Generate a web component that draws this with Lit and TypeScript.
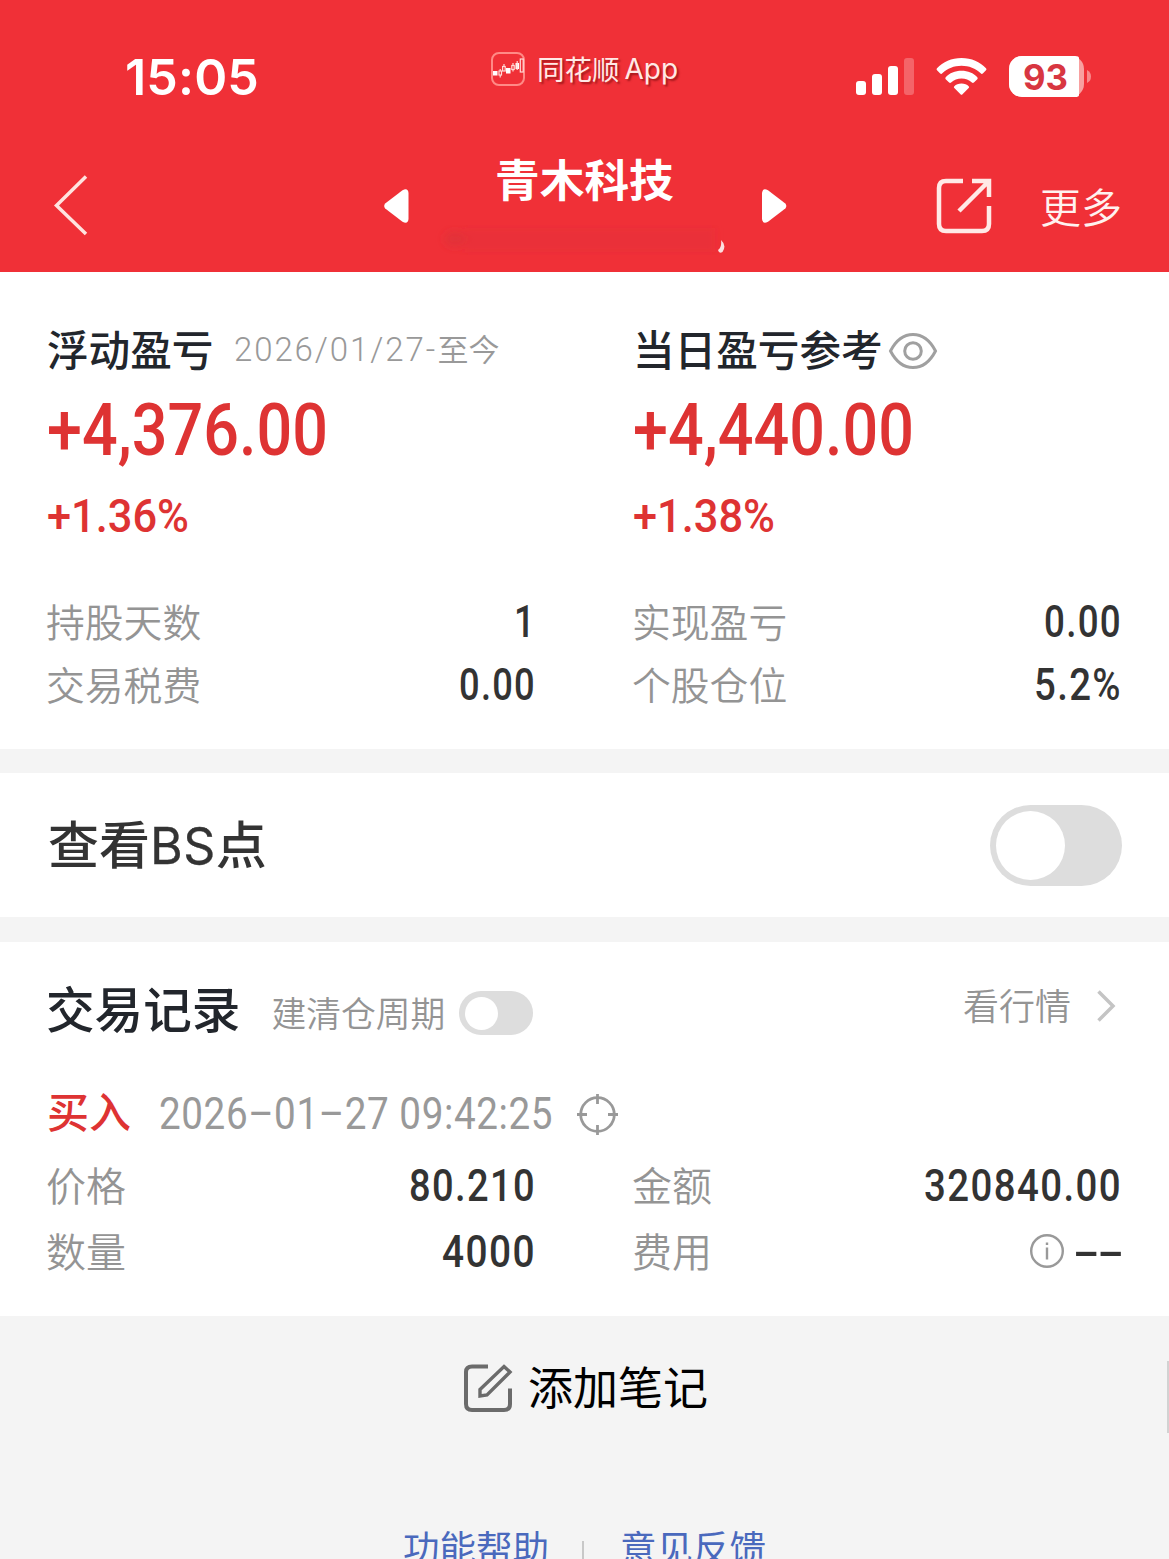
import { LitElement, html, css, svg } from "lit";
import { customElement, property } from "lit/decorators.js";

@customElement("fit-figure")
class FitFigure extends LitElement {
  @property() text = "";
  @property({ type: Number }) width = 100;
  @property({ type: Number }) cap = 31;
  @property({ type: Number }) size = 43.5;
  static styles = css`
    :host { display: block; flex: none; line-height: 0; }
    svg { display: block; overflow: visible; }
    text { fill: currentColor; font-family: inherit; font-weight: inherit; white-space: pre; }
  `;
  render() {
    return html`<svg width=${this.width} height=${this.cap}>
      <text x="0" y=${this.cap} font-size=${this.size} textLength=${this.width} lengthAdjust="spacingAndGlyphs">${this.text}</text>
    </svg>`;
  }
}

@customElement("toggle-switch")
class ToggleSwitch extends LitElement {
  static styles = css`
    :host { display: flex; align-items: center; flex: none; box-sizing: border-box; width: 132px; height: 81px; padding-left: 6px; border-radius: 41px; background: #ddd; }
    .knob { width: 69px; height: 69px; border-radius: 50%; background: #fff; }
    :host([small]) { width: 74px; height: 44px; border-radius: 22px; }
    :host([small]) .knob { width: 33px; height: 33px; }
  `;
  render() {
    return html`<div class="knob"></div>`;
  }
}

const candles = svg`
  <g fill="#fff"><rect x="2" y="19" width="4.500" height="4.500"/><rect x="15" y="16" width="4.500" height="5.500"/><rect x="24.500" y="11" width="3.500" height="6"/></g>
  <g fill="none" stroke="#ffd9d6" stroke-width="1.200"><rect x="8" y="19" width="2.500" height="4"/><path d="M9.200 17v2M9.200 23v2.500M13 12v2.500M22 11v2.500M22 17.500v2M26.200 9v9"/>
  <rect x="11.600" y="14.500" width="2.600" height="4.500"/><rect x="20.800" y="13.500" width="2.400" height="4"/><rect x="29.300" y="7" width="2.900" height="13"/></g>`;

@customElement("app-root")
class AppRoot extends LitElement {
  static styles = css`
    :host { display: block; width: 1169px; height: 1559px; overflow: hidden; position: relative; background: #f4f4f4; color: #333; font-family: "Noto Sans CJK SC", sans-serif; }
    * { box-sizing: border-box; }
    svg { display: block; flex: none; overflow: visible; }
    .row { display: flex; align-items: center; white-space: nowrap; }
    .between { justify-content: space-between; }
    header { height: 272px; background: #f03037; color: #fff; }
    .status { height: 140px; align-items: flex-start; padding: 0 78px 0 125px; }
    .clock { margin-top: 59px; width: 366px; font-family: Inter, sans-serif; font-weight: 600; letter-spacing: 0.01em; }
    .brand { margin-top: 52px; gap: 12px; height: 34px; width: 365px; font-size: 27.500px; line-height: 34px; color: #ffe9e6; text-shadow: 2px 2px 2px rgba(90, 0, 0, 0.5); }
    .brand .cjk { margin-top: -2px; }
    .brand .latin { font-family: Inter, sans-serif; font-size: 28px; margin-left: -7px; }
    .signals { margin-top: 56px; height: 41px; }
    .wifi { margin-left: 22px; }
    .battery { margin-left: 22px; position: relative; }
    .level { position: absolute; left: 14px; top: 8px; font-family: Inter, sans-serif; font-weight: 700; color: #d83641; }
    .nav { height: 132px; align-items: flex-start; padding-left: 53px; color: #fff; }
    .back { margin-top: 35px; width: 331px; }
    .prev, .next { margin-top: 49px; }
    .name { margin-left: 86px; margin-top: 8px; width: 267px; font-size: 44.700px; line-height: 60px; font-weight: 700; }
    .next { width: 174px; }
    .share { margin-top: 38px; width: 104px; }
    .more { margin-top: 35px; font-size: 41px; line-height: 60px; font-weight: 350; color: #fff1ef; }
    .smudge { position: absolute; left: 440px; top: 220px; }
    .card { background: #fff; }
    .summary { height: 477px; padding: 48px 48px 0 47px; display: grid; grid-template-columns: 488px 488px; column-gap: 98px; }
    .title { height: 56px; font-size: 41.600px; line-height: 56px; font-weight: 500; color: #22262c; }
    .title .head { margin-top: -1px; }
    .since { margin-left: 21px; font-size: 31px; font-weight: 350; color: #999; }
    .since fit-figure { font-family: Roboto, sans-serif; font-weight: 350; letter-spacing: 0.06em; margin-top: 3px; }
    .eye { margin-left: 6px; margin-top: 6px; }
    .fig { font-family: Roboto, sans-serif; font-weight: 500; }
    .up { color: #de3333; }
    .amount { padding-top: 27px; height: 104px; }
    .rate { padding-top: 19px; height: 109px; }
    .stat { height: 63px; font-size: 38.800px; line-height: 60px; }
    .stat .fig, .pairs .fig { letter-spacing: 0.04em; margin-right: -1px; margin-top: 1px; }
    .label { font-weight: 350; color: #949494; }
    .stat .label, .pairs .label { margin: -2px 0 0 -1px; }
    .bs { height: 144px; margin-top: 24px; padding: 0 47px 0 48px; font-size: 51px; line-height: 60px; font-weight: 500; }
    .bs .words { margin-top: -2px; }
    .bs .latin { font-family: Inter, sans-serif; font-size: 50px; font-weight: 400; letter-spacing: 0.01em; -webkit-text-stroke: 0.3px currentColor; }
    .records { margin-top: 25px; height: 374px; padding: 0 48px 0 47px; }
    .heading { height: 134px; }
    .heading h2 { margin: -4px 0 0 -1px; font-size: 48.600px; line-height: 60px; font-weight: 500; color: #22262c; }
    .cycle { margin: 6px 14px 0 31px; font-size: 34.800px; line-height: 50px; }
    .heading toggle-switch { margin-top: 8px; }
    .quote { margin: -10px 0 0 auto; font-size: 36px; line-height: 50px; gap: 26px; padding-right: 6px; }
    .quote svg { margin-top: 4px; }
    .deal { height: 76px; }
    .side { font-size: 42px; line-height: 60px; font-weight: 500; margin-top: -9px; }
    .stamp { margin: -1px 24px 0 28px; font-family: Roboto, sans-serif; font-weight: 400; color: #999; letter-spacing: 0.04em; }
    .pairs { display: grid; grid-template-columns: 488px 488px; column-gap: 98px; }
    .pairs .row { height: 66px; font-size: 40px; line-height: 60px; }
    .fee { gap: 9px; }
    .pairs .fee .fig { letter-spacing: -0.03em; }
    .note { margin-top: 40px; padding-left: 464px; height: 60px; gap: 16px; font-size: 45px; line-height: 60px; color: #000; }
    .note svg { margin-top: 4px; }
    .links { margin-top: 101px; padding-left: 403px; font-size: 36.500px; line-height: 60px; color: #4a69bd; }
    .bar { width: 2px; height: 30px; background: #c8c8c8; margin: 18px 36px 0 33px; }
    .scroll { position: absolute; right: 0; top: 1361px; width: 2px; height: 72px; background: #d2d2d2; }
  `;

  private summary(title: unknown, amount: string, rate: string, stats: [string, string, number][]) {
    return html`<section>
      <div class="row title">${title}</div>
      <div class="fig up amount"><fit-figure .text=${amount} .width=${281} .cap=${52} .size=${73}></fit-figure></div>
      <div class="fig up rate"><fit-figure .text=${rate} .width=${142} .cap=${33} .size=${46.5}></fit-figure></div>
      ${stats.map(([k, v, w]) => html`<div class="row between stat"><span class="label">${k}</span>
        <fit-figure class="fig" .text=${v} .width=${w}></fit-figure></div>`)}
    </section>`;
  }

  private pair(label: string, value: string, w: number) {
    return html`<div class="row between"><span class="label">${label}</span>
      <fit-figure class="fig" .text=${value} .width=${w}></fit-figure></div>`;
  }

  render() {
    return html`
      <header>
        <div class="row status">
          <div class="clock"><fit-figure .text=${"15:05"} .width=${134} .cap=${36} .size=${49.5}></fit-figure></div>
          <div class="row brand">
            <svg width="34" height="34"><rect x="1" y="1" width="32" height="32" rx="7" fill="none" stroke="#ff8a86" stroke-width="2"/>${candles}</svg>
            <span class="cjk">同花顺</span><span class="latin">App</span>
          </div>
          <div class="row signals">
            <svg width="58" height="41" fill="#fff">
              <rect x="0" y="25" width="10" height="14" rx="3"/><rect x="16" y="18" width="10" height="21" rx="3"/>
              <rect x="32" y="10" width="10" height="29" rx="3"/><rect x="48" y="2" width="10" height="37" rx="3" opacity=".25"/>
            </svg>
            <svg class="wifi" width="51" height="41" fill="#fff">
              <path d="M25.500 2C35.500 2 44 6 50 12.200Q51 13.300 50 14.300L46.800 17.400Q45.800 18.400 44.700 17.300C39.500 12.500 33 9.800 25.500 9.800S11.500 12.500 6.300 17.300Q5.200 18.400 4.200 17.400L1 14.300Q0 13.300 1 12.200C7 6 15.500 2 25.500 2Z"/>
              <path d="M25.500 14.800C32 14.800 37.500 17.200 41.300 21.200Q42.200 22.200 41.300 23.200L37.900 26.500Q36.900 27.400 35.900 26.500C33 24 29.500 22.600 25.500 22.600S18 24 15.100 26.500Q14.100 27.400 13.100 26.500L9.700 23.200Q8.800 22.200 9.700 21.200C13.500 17.200 19 14.800 25.500 14.800Z"/>
              <path d="M25.500 27.600C28.500 27.600 31 28.600 32.700 30.200Q33.600 31.100 32.700 32L26.500 38.200Q25.500 39.200 24.500 38.200L18.300 32Q17.400 31.100 18.300 30.200C20 28.600 22.500 27.600 25.500 27.600Z"/>
            </svg>
            <div class="battery">
              <svg width="82" height="41">
                <rect width="75" height="41" rx="13" fill="#f8a0a0"/>
                <path d="M13 0H66Q70 0 70 2V39Q70 41 66 41H13A13 13 0 0 1 0 28V13A13 13 0 0 1 13 0Z" fill="#fff"/>
                <path d="M78 14Q82 16 82 20.500T78 27Z" fill="#f8888a"/>
              </svg>
              <div class="level"><fit-figure .text=${"93"} .width=${45} .cap=${25.5} .size=${35}></fit-figure></div>
            </div>
          </div>
        </div>
        <div class="row nav">
          <svg class="back" width="331" height="60" fill="none" stroke="#ffe3df" stroke-width="3.500"><path d="M33 1.500L3.500 30.500L33 59"/></svg>
          <svg class="prev" width="25" height="34" fill="#fff"><path d="M1.200 14.500L18.500 1.300Q24 -1.500 24.500 4V30Q24 35.500 18.500 32.700L1.200 19.500Q-.8 17 1.200 14.500Z"/></svg>
          <div class="name">青木科技</div>
          <svg class="next" width="174" height="34" fill="#fff"><path d="M23.300 14.500L6 1.300Q.5 -1.500 0 4V30Q.5 35.500 6 32.700L23.300 19.500Q25.300 17 23.300 14.500Z"/></svg>
          <svg class="share" width="104" height="56" fill="none" stroke="#ffe9e6" stroke-width="4.500">
            <path d="M27 3H10Q3 3 3 10V46Q3 53 10 53H46Q53 53 53 46V28M36 3H53V19M53 3L23 33"/>
          </svg>
          <div class="more">更多</div>
        </div>
      </header>
      <svg class="smudge" width="300" height="40">
        <defs><filter id="soft"><feGaussianBlur stdDeviation="4"/></filter><filter id="fine"><feGaussianBlur stdDeviation=".7"/></filter></defs>
        <g filter="url(#soft)" fill="#c9363d"><ellipse cx="15" cy="19" rx="11" ry="8" opacity=".35"/><rect x="25" y="8" width="250" height="24" opacity=".14"/></g>
        <path d="M281 20Q287 25.500 282.500 32Q279 34 278 30Q282 27 281 20Z" fill="#fff" opacity=".85" filter="url(#fine)"/>
      </svg>

      <div class="card summary">
        ${this.summary(
          html`<span class="head">浮动盈亏</span><span class="row since"><fit-figure .text=${"2026/01/27-"} .width=${203} .cap=${23} .size=${32.5}></fit-figure>至今</span>`,
          "+4,376.00", "+1.36%", [["持股天数", "1", 22], ["交易税费", "0.00", 77]])}
        ${this.summary(
          html`<span class="head">当日盈亏参考</span><svg class="eye" width="48" height="36" fill="none" stroke="#a0a0a0" stroke-width="3">
            <path d="M1.500 18Q10 1.500 24 1.500T46.500 18Q38 34.500 24 34.500T1.500 18Z"/><circle cx="24" cy="18" r="8.300"/></svg>`,
          "+4,440.00", "+1.38%", [["实现盈亏", "0.00", 78], ["个股仓位", "5.2%", 88]])}
      </div>

      <div class="card row between bs"><span class="words">查看<span class="latin">BS</span>点</span><toggle-switch></toggle-switch></div>

      <div class="card records">
        <div class="row heading">
          <h2>交易记录</h2><span class="label cycle">建清仓周期</span><toggle-switch small></toggle-switch>
          <div class="row label quote">看行情
            <svg width="18" height="32" fill="none" stroke="#c4c4c4" stroke-width="3.500"><path d="M1.500 1.500L16 16L1.500 30.500"/></svg>
          </div>
        </div>
        <div class="row deal">
          <span class="up side">买入</span>
          <fit-figure class="stamp" .text=${"2026–01–27 09:42:25"} .width=${394}></fit-figure>
          <svg width="41" height="41" fill="none" stroke="#999" stroke-width="2.800"><circle cx="20.500" cy="20.500" r="16.800"/><path d="M20.500 0V10M20.500 31V41M0 20.500H10M31 20.500H41"/></svg>
        </div>
        <div class="pairs">
          ${this.pair("价格", "80.210", 127)}
          ${this.pair("金额", "320840.00", 198)}
          ${this.pair("数量", "4000", 94)}
          <div class="row between"><span class="label">费用</span>
            <div class="row fee">
              <svg width="34" height="36" fill="none" stroke="#999" stroke-width="2.400"><circle cx="17" cy="18" r="15.800"/><path d="M17 14.500V26.500M17 9.500V12"/></svg>
              <fit-figure class="fig" .text=${"--"} .width=${49}></fit-figure>
            </div>
          </div>
        </div>
      </div>

      <div class="row note">
        <svg width="48" height="48" fill="none" stroke="#6b6b6b" stroke-width="4">
          <path d="M24 2.500H8Q2 2.500 2 8V40Q2 46 8 46H40Q46 46 46 40V24.500"/><path stroke-width="3.400" d="M40 2.500L46 8L23 31L16 32V25.500Z"/>
        </svg>添加笔记
      </div>
      <div class="row links">功能帮助<span class="bar"></span>意见反馈</div>
      <div class="scroll"></div>
    `;
  }
}
